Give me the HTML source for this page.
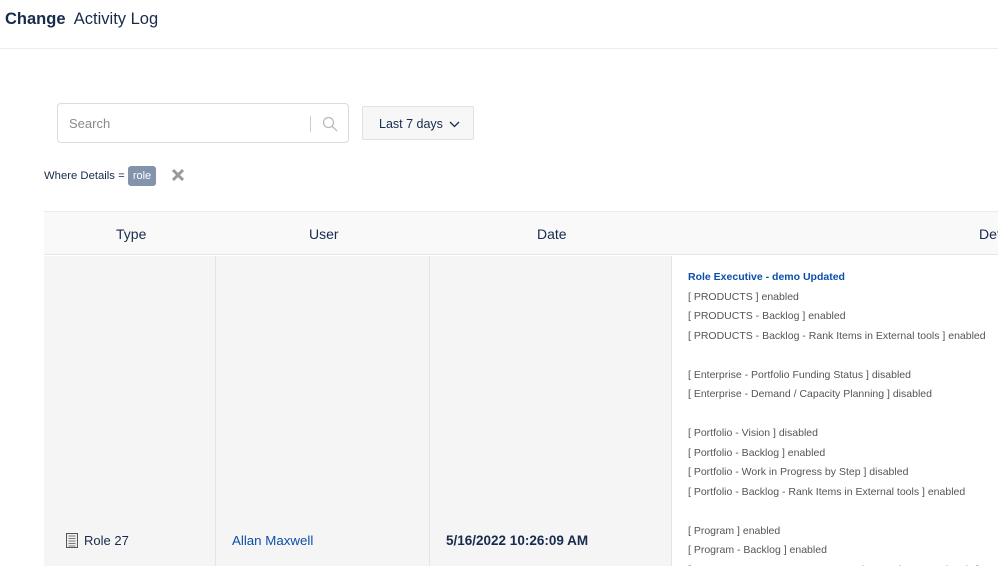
<!DOCTYPE html>
<html><head><meta charset="utf-8"><style>
*{margin:0;padding:0;box-sizing:border-box}
html,body{width:998px;height:566px;overflow:hidden}
body{background:#fff;font-family:"Liberation Sans",Arial,sans-serif;position:relative;color:#172b4d}
.a{position:absolute}
.title{left:5px;top:10px;font-size:16.5px;color:#172b4d;white-space:nowrap}
.hr{left:0;top:48px;width:998px;height:1px;background:#ececec}
.search{left:57px;top:103px;width:292px;height:40px;border:1px solid #dcdcdc;border-radius:4px}
.search span{position:absolute;left:11px;top:12px;font-size:13px;color:#8a8a8a}
.btn{left:362px;top:106px;width:112px;height:34px;border:1px solid #e2e2e2;background:#f7f7f7;border-radius:2px;font-size:13px;color:#172b4d}
.tbl-h{left:44px;top:211px;width:954px;height:44px;background:#f9f9f9;border-top:1px solid #ececec;border-bottom:1px solid #e6e6e6}
.th{top:226px;font-size:14px;color:#172b4d}
.row{left:44px;top:256px;width:627px;height:310px;background:#f5f5f5}
.vl{top:256px;width:1px;height:310px;background:#e4e4e4}
.det{left:688px;top:268px;font-size:10.5px;color:#555;line-height:19.5px;white-space:nowrap}
</style></head><body>
<div class="a title"><b>Change</b>&nbsp; Activity Log</div>
<div class="a hr"></div>
<div class="a search"><span>Search</span>
<div style="position:absolute;left:252px;top:12px;width:1px;height:16px;background:#ccc"></div>
<svg style="position:absolute;left:264px;top:12px" width="16" height="16" viewBox="0 0 16 16"><circle cx="6.5" cy="6.5" r="5" fill="none" stroke="#bbb" stroke-width="1.3"/><path d="M10 10l5 5" stroke="#bbb" stroke-width="1.3"/></svg></div>
<div class="a btn"><span style="position:absolute;left:16px;top:10px;font-size:12.5px">Last 7 days</span>
<svg style="position:absolute;left:86px;top:14px" width="11" height="7" viewBox="0 0 11 7"><path d="M1 1l4.5 4.5L10 1" fill="none" stroke="#172b4d" stroke-width="1.3"/></svg></div>
<div class="a" style="left:44px;top:170px;font-size:11.3px;color:#172b4d">Where Details =</div>
<div class="a" style="left:128px;top:166px;width:28px;height:20px;background:#8393ab;border-radius:3px;color:#fff;font-size:11px;text-align:center;line-height:21px">role</div>
<svg class="a" style="left:171px;top:168px" width="14" height="14" viewBox="0 0 14 14"><path d="M2 2l10 10M12 2L2 12" stroke="#999" stroke-width="3"/></svg>
<div class="a tbl-h"></div>
<div class="a th" style="left:116px">Type</div>
<div class="a th" style="left:309px">User</div>
<div class="a th" style="left:537px">Date</div>
<div class="a th" style="left:979px">Det</div>
<div class="a row"></div>
<div class="a vl" style="left:215px"></div>
<div class="a vl" style="left:429px"></div>
<div class="a vl" style="left:671px"></div>
<svg class="a" style="left:66px;top:533px" width="12" height="15" viewBox="0 0 12 15"><rect x="0.5" y="0.5" width="11" height="14" fill="#eee" stroke="#555"/><path d="M2.5 3h7M2.5 5.5h7M2.5 8h7M2.5 10.5h7M2.5 13h7" stroke="#555" stroke-width="0.8"/></svg>
<div class="a" style="left:84px;top:533px;font-size:13px;color:#172b4d">Role 27</div>
<div class="a" style="left:232px;top:533px;font-size:13.3px;color:#0b4fa8">Allan Maxwell</div>
<div class="a" style="left:446px;top:533px;font-size:13.5px;font-weight:bold;color:#172b4d">5/16/2022 10:26:09 AM</div>
<div class="a det">
<b style="color:#0b4fa8">Role Executive - demo Updated</b><br>
[ PRODUCTS ] enabled<br>
[ PRODUCTS - Backlog ] enabled<br>
[ PRODUCTS - Backlog - Rank Items in External tools ] enabled<br><br>
[ Enterprise - Portfolio Funding Status ] disabled<br>
[ Enterprise - Demand / Capacity Planning ] disabled<br><br>
[ Portfolio - Vision ] disabled<br>
[ Portfolio - Backlog ] enabled<br>
[ Portfolio - Work in Progress by Step ] disabled<br>
[ Portfolio - Backlog - Rank Items in External tools ] enabled<br><br>
[ Program ] enabled<br>
[ Program - Backlog ] enabled<br>
[ Program - Program Increment - Rank Items in External tools ] enabled
</div>
</body></html>
